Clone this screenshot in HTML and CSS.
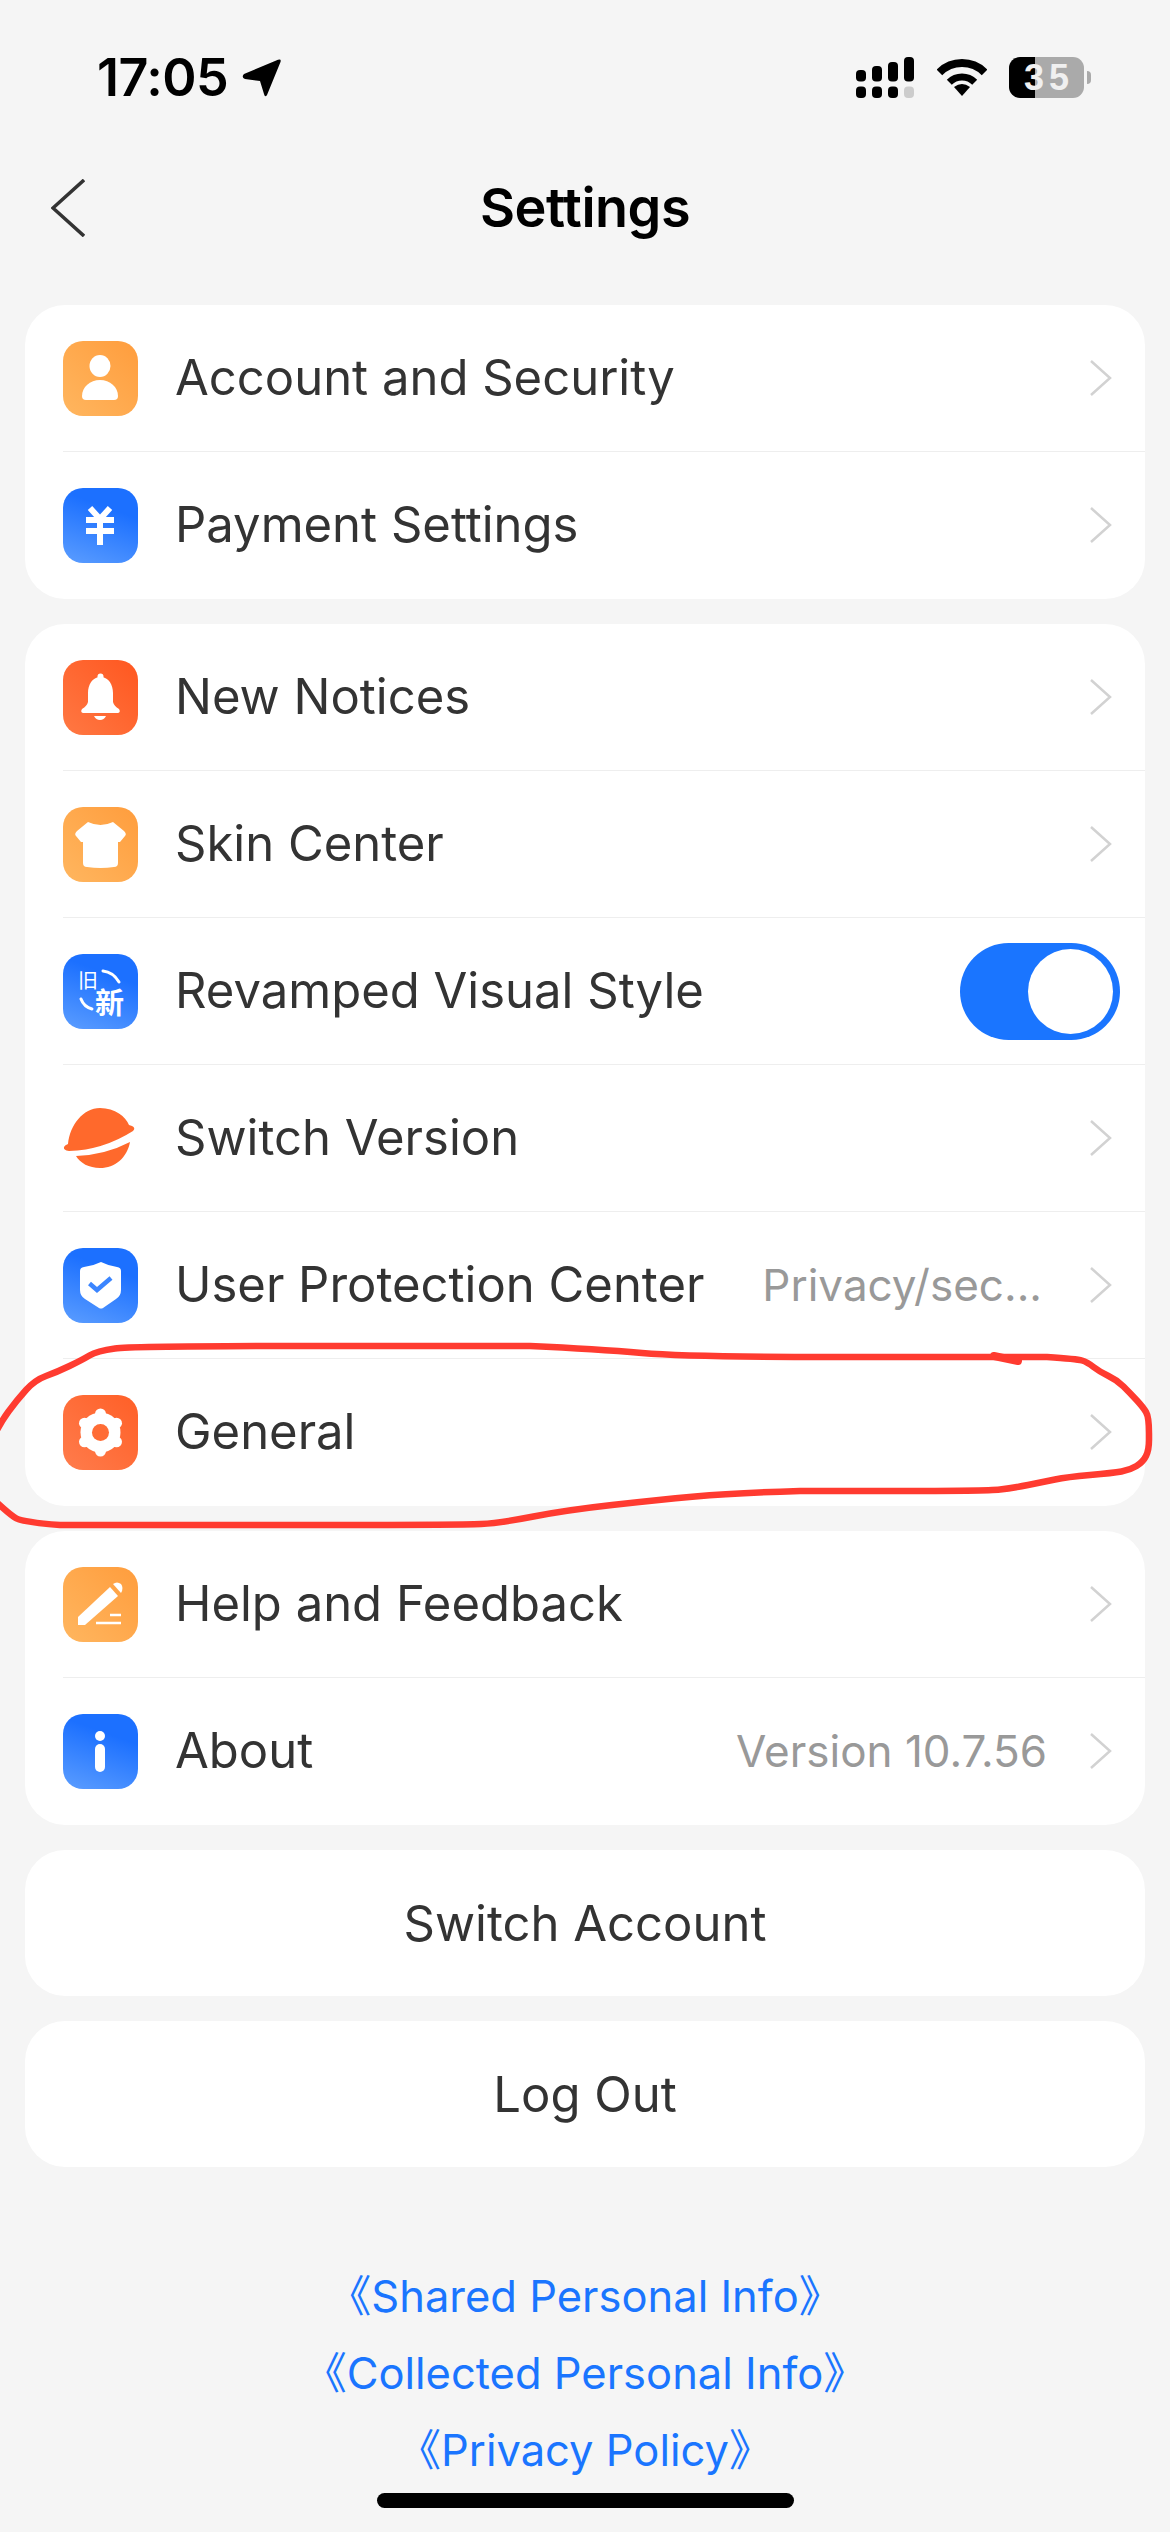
FILE: index.html
```html
<!DOCTYPE html>
<html lang="en">
<head>
<meta charset="utf-8">
<title>Settings</title>
<link rel="stylesheet" href="styles.css">
</head>
<body>
<div class="phone">
  <header class="status">
    <div class="status-left">
      <span class="time">17:05</span>
      <svg class="loc" viewBox="0 0 39 38"><path d="M36 .8Q39.500-.500 38.500 3L25 36Q23 39 22 35L18 22 3 20Q-1 18 2 15Z"/></svg>
    </div>
    <div class="status-right">
      <svg class="signal" viewBox="0 0 58 41">
        <rect x="0" y="13" width="10" height="11.500" rx="4"/><rect x="16" y="9" width="10" height="15.500" rx="4"/><rect x="32" y="5" width="10" height="19.500" rx="4"/><rect x="48" y="0" width="10" height="24.500" rx="4"/>
        <rect x="0" y="29.500" width="10" height="11.500" rx="4"/><rect x="16" y="29.500" width="10" height="11.500" rx="4"/><rect x="32" y="29.500" width="10" height="11.500" rx="4"/><rect class="signal-off" x="48" y="29.500" width="10" height="11.500" rx="4"/>
      </svg>
      <svg class="wifi" viewBox="0 0 50 37">
        <path class="wifi-arc" d="M2.400 13.400A32 32 0 0 1 47.600 13.400" stroke-width="8"/>
        <path class="wifi-arc" d="M12.300 23.300A18 18 0 0 1 37.700 23.300" stroke-width="7"/>
        <path d="M25 37L17 28Q25 22 33 28Z"/>
      </svg>
      <div class="battery-wrap">
        <div class="battery">35</div>
        <span class="battery-tip"></span>
      </div>
    </div>
  </header>

  <nav class="nav">
    <svg class="back" viewBox="0 0 34 58"><path d="M33 1L2 29 33 57"/></svg>
    <h1 class="title">Settings</h1>
    <span></span>
  </nav>

  <main class="list">
    <section class="card">
      <div class="row">
        <span class="icon orange"><svg viewBox="0 0 75 75"><ellipse cx="37" cy="25" rx="10.500" ry="11"/><path d="M19 55C19 46 27 39 37 39S55 46 55 55Q55 59 51 59H23Q19 59 19 55Z"/></svg></span>
        <span class="label">Account and Security</span>
        <svg class="chev" viewBox="0 0 22 36"><path d="M1 1L20 18 1 35"/></svg>
      </div>
      <div class="row">
        <span class="icon blue"><svg viewBox="0 0 75 75"><path class="glyph-line" d="M27 20L37 31 47 20M23 32H51M23 43H51M37 31V57" stroke-width="6"/></svg></span>
        <span class="label">Payment Settings</span>
        <svg class="chev" viewBox="0 0 22 36"><path d="M1 1L20 18 1 35"/></svg>
      </div>
    </section>

    <section class="card">
      <div class="row">
        <span class="icon red"><svg viewBox="0 0 75 75"><circle cx="37.500" cy="16.500" r="3"/><path d="M37.500 17C46 17 50 25 50 33V42Q51 46 56 49Q58 52 55 53H20Q17 52 19 49Q24 46 25 42V33C25 25 29 17 37.500 17Z"/><path d="M31 56H43Q41 60 37 60Q33 60 31 56Z"/></svg></span>
        <span class="label">New Notices</span>
        <svg class="chev" viewBox="0 0 22 36"><path d="M1 1L20 18 1 35"/></svg>
      </div>
      <div class="row">
        <span class="icon orange"><svg viewBox="0 0 75 75"><path d="M25 15Q37.500 21 50 15L61 24Q64 27 62 29L57 35 55 35V56Q55 60 51 60Q37.500 62 24 60Q20 60 20 56V35L18 35 13 29Q11 27 14 24Z"/></svg></span>
        <span class="label">Skin Center</span>
        <svg class="chev" viewBox="0 0 22 36"><path d="M1 1L20 18 1 35"/></svg>
      </div>
      <div class="row">
        <span class="icon blue"><svg viewBox="0 0 75 75"><text class="cjk-old" x="15" y="34">旧</text><text class="cjk-new" x="32" y="60">新</text><path class="glyph-arc" d="M40 17Q50 18 56 28M18 45Q21 53 29 55" stroke-width="3"/></svg></span>
        <span class="label">Revamped Visual Style</span>
        <span class="switch"><span class="knob"></span></span>
      </div>
      <div class="row">
        <span class="icon plain"><svg viewBox="0 0 75 75"><path class="planet" d="M5 43C7 24 20 7 37 7C52 7 63 16 66 24L69 25Q73 27 70 30Q40 49 6 50Q0 49 1 46Q2 44 5 43Z"/><path class="planet" d="M13 55Q42 54 67 41C64 57 52 67 37 67C26 67 17 62 13 55Z"/></svg></span>
        <span class="label">Switch Version</span>
        <svg class="chev" viewBox="0 0 22 36"><path d="M1 1L20 18 1 35"/></svg>
      </div>
      <div class="row">
        <span class="icon blue"><svg viewBox="0 0 75 75"><path d="M38 14Q46 18 54 19Q58 19.500 58 23V42Q58 48 53 51L40 60Q38 61 36 60L22 51Q17 48 17 42V23Q17 19.500 21 19Q30 18 38 14Z"/><path class="check" d="M26.500 35.500L34 42 48 30" stroke-width="4.500"/></svg></span>
        <span class="label">User Protection Center</span>
        <span class="value privacy">Privacy/sec...</span>
        <svg class="chev" viewBox="0 0 22 36"><path d="M1 1L20 18 1 35"/></svg>
      </div>
      <div class="row">
        <span class="icon red-soft"><svg viewBox="0 0 75 75"><circle cx="37.500" cy="37.500" r="20"/><circle cx="37.500" cy="19" r="5.500"/><circle cx="37.500" cy="56" r="5.500"/><circle cx="21.500" cy="28.200" r="5.500"/><circle cx="53.500" cy="28.200" r="5.500"/><circle cx="21.500" cy="46.800" r="5.500"/><circle cx="53.500" cy="46.800" r="5.500"/><circle class="gear-hole" cx="37.500" cy="37.500" r="8.500"/></svg></span>
        <span class="label">General</span>
        <svg class="chev" viewBox="0 0 22 36"><path d="M1 1L20 18 1 35"/></svg>
      </div>
    </section>

    <section class="card">
      <div class="row">
        <span class="icon orange"><svg viewBox="0 0 75 75"><path d="M15 50L47 20 55 29 22 58H15Z"/><path d="M50 17Q54 14 58 17Q61 21 58 26Z"/><path class="glyph-line" d="M47 48H58M33 56H58" stroke-width="2.500"/></svg></span>
        <span class="label">Help and Feedback</span>
        <svg class="chev" viewBox="0 0 22 36"><path d="M1 1L20 18 1 35"/></svg>
      </div>
      <div class="row">
        <span class="icon blue"><svg viewBox="0 0 75 75"><circle cx="37" cy="22" r="5"/><rect x="32" y="30" width="10" height="28" rx="5"/></svg></span>
        <span class="label">About</span>
        <span class="value version">Version 10.7.56</span>
        <svg class="chev" viewBox="0 0 22 36"><path d="M1 1L20 18 1 35"/></svg>
      </div>
    </section>

    <button class="action">Switch Account</button>
    <button class="action">Log Out</button>
  </main>

  <footer class="links">
    <a class="link">《Shared Personal Info》</a>
    <a class="link">《Collected Personal Info》</a>
    <a class="link">《Privacy Policy》</a>
  </footer>
  <div class="home"></div>

  <svg class="scribble" viewBox="0 0 1170 2532">
    <path d="M-8 1440Q0 1423 8.500 1411.500Q17 1400 26 1390Q35 1380 46 1376Q57 1372 69.500 1366Q82 1360 89.500 1355.500Q97 1351 115 1348.500Q133 1346 331 1346L530 1346Q597 1349 642 1353Q687 1357 830 1357L1047 1357Q1077 1359 1082 1360.500Q1087 1362 1093.500 1367Q1100 1372 1108.500 1376Q1117 1380 1123.500 1386.500Q1130 1393 1136.500 1400Q1143 1407 1146 1412Q1149 1417 1149 1433.500L1149 1440Q1149 1450 1146 1456Q1143 1462 1136.500 1466Q1130 1470 1121.500 1471.500Q1113 1473 1090 1475Q1067 1477 1055 1479.500Q1043 1482 1028 1485Q1013 1488 1000 1489.500Q987 1491 893 1491L800 1491Q733 1493 695 1496.500Q657 1500 612 1505Q567 1510 533.500 1516.500Q500 1523 481 1524Q463 1525 300 1525L60 1525Q23 1522 16.500 1518.500Q10 1515 -8 1498"/>
    <path class="tick" d="M994 1356L1018 1361"/>
  </svg>
</div>
</body>
</html>
```
FILE: styles.css
```css
* { box-sizing: border-box; }
html, body { margin: 0; padding: 0; }
body { background: #f5f5f5; font-family: Inter, "Noto Sans CJK SC", sans-serif; }
.phone { position: relative; width: 1170px; height: 2532px; overflow: hidden; background: #f5f5f5; }

.status { display: flex; justify-content: space-between; align-items: flex-start; height: 155px; padding: 57px 79px 0 97px; }
.status-left { display: flex; align-items: center; gap: 14px; height: 41px; }
.time { font-size: 52px; font-weight: 600; line-height: 41px; color: #000; letter-spacing: -0.5px; }
.loc { width: 39px; height: 38px; fill: #000; }
.status-right { display: flex; align-items: flex-start; }
.signal { width: 58px; height: 41px; fill: #000; margin-right: 23px; }
.signal-off { fill: #ccc; }
.wifi { width: 50px; height: 37px; margin-top: 2px; margin-right: 22px; fill: #000; }
.wifi-arc { fill: none; stroke: #000; }
.battery-wrap { display: flex; align-items: center; gap: 3px; }
.battery { width: 75px; height: 41px; padding-left: 5px; border-radius: 11px; background: linear-gradient(90deg, #000 26px, #aaa 26px); color: #f0f0f0; font-family: "Liberation Sans", sans-serif; font-size: 36px; font-weight: 700; line-height: 41px; letter-spacing: 5px; text-align: center; }
.battery-tip { width: 4px; height: 13px; background: #aaa; border-radius: 0 6px 6px 0; }

.nav { display: grid; grid-template-columns: 1fr auto 1fr; align-items: center; height: 105px; padding-left: 51px; padding-right: 51px; margin-bottom: 45px; }
.back { width: 34px; height: 58px; fill: none; stroke: #333; stroke-width: 3.500px; }
.title { margin: 0; font-size: 54px; font-weight: 600; color: #000; letter-spacing: -0.5px; }

.list { display: flex; flex-direction: column; gap: 25px; padding: 0 25px; }
.card { background: #fff; border-radius: 40px; padding-bottom: 1px; overflow: hidden; }
.row { display: flex; align-items: center; margin-left: 38px; height: 147px; padding-right: 36px; border-top: 1px solid #eee; }
.row:first-child { height: 146px; border-top: 0; }
.icon { flex: none; width: 75px; height: 75px; border-radius: 20px; margin-right: 37px; }
.icon svg { display: block; width: 75px; height: 75px; fill: #fff; }
.orange { background: linear-gradient(to top right, #ffb65f, #ff9d3d); }
.blue { background: linear-gradient(200deg, #1c70ff 30%, #5b9dff 100%); }
.red { background: linear-gradient(to top right, #ff7843, #ff5720); }
.red-soft { background: linear-gradient(to top right, #ff7c4c, #ff5f27); }
.plain { background: none; }
.planet { fill: #ff692c; }
.check { fill: none; stroke: #3b85ff; }
.gear-hole { fill: #ff6c35; }
.glyph-line { fill: none; stroke: #fff; }
.glyph-arc { fill: none; stroke: #fff; stroke-linecap: round; }
.cjk-old { font-size: 20px; font-family: "Noto Sans CJK SC", sans-serif; }
.cjk-new { font-size: 29px; font-weight: 700; font-family: "Noto Sans CJK SC", sans-serif; }

.label { flex: 1 1 auto; padding-bottom: 2px; font-size: 49px; color: #333; letter-spacing: 0; white-space: nowrap; }
.value { flex: none; font-size: 44px; color: #999; letter-spacing: 0; white-space: nowrap; }
.privacy { margin-right: 48px; }
.version { margin-right: 43px; }
.chev { flex: none; width: 22px; height: 36px; margin-right: -3px; fill: none; stroke: #d2d2d2; stroke-width: 2.500px; }
.switch { flex: none; position: relative; width: 160px; height: 97px; margin-right: -11px; border-radius: 49px; background: #1a75ff; }
.knob { position: absolute; right: 7px; top: 6px; width: 85px; height: 85px; border-radius: 50%; background: #fff; }

.action { display: block; width: 100%; height: 146px; padding-top: 2px; border: 0; border-radius: 40px; background: #fff; font-family: inherit; font-size: 49px; color: #333; letter-spacing: 0; }

.links { display: flex; flex-direction: column; align-items: center; margin-top: 91px; }
.link { font-size: 43.500px; line-height: 77px; color: #1a75ff; white-space: nowrap; }
.home { width: 417px; height: 15px; margin: 4px auto 0; border-radius: 8px; background: #000; }

.scribble { position: absolute; left: 0; top: 0; width: 1170px; height: 2532px; pointer-events: none; fill: none; stroke: #ff3b30; stroke-width: 6.500px; stroke-linecap: round; stroke-linejoin: round; }
.tick { stroke-width: 8px; }
```
